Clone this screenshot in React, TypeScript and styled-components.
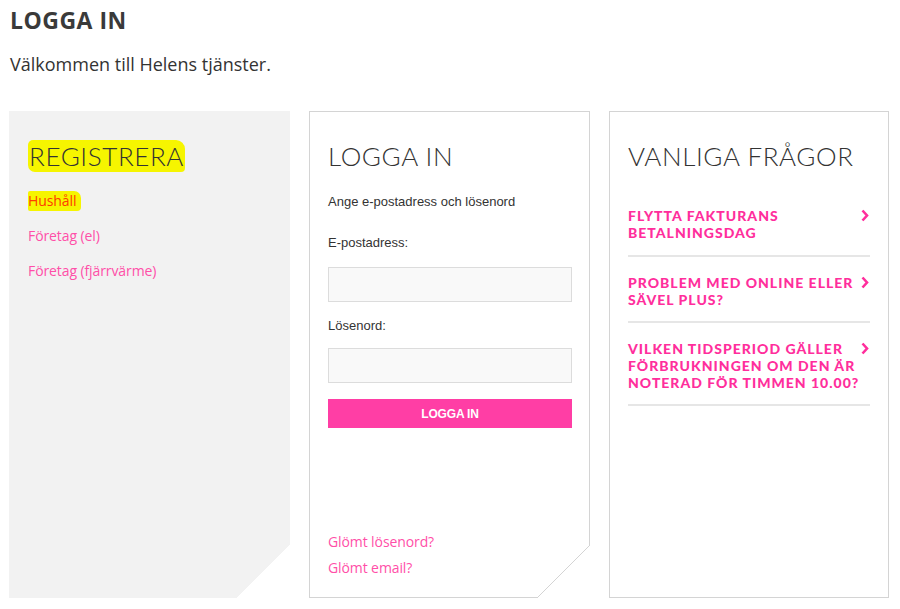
import * as React from 'react';
import styled, { createGlobalStyle } from 'styled-components';

const GlobalStyle = createGlobalStyle`
  html, body { margin: 0; padding: 0; background: #FFF; }
  body { font-family: "Open Sans", "Liberation Sans", sans-serif; color: #333; }
  * { box-sizing: border-box; }
`;

const PINK = '#FF3EA5';
const CUT = 53;

const Page = styled.div`
  width: 900px;
  padding: 0 11px 0 9px;
`;

const Intro = styled.div`
  padding: 4px 1px 0;
`;

const Title = styled.h1`
  margin: 0;
  font-family: "Open Sans", sans-serif;
  font-weight: 700;
  font-size: 23px;
  line-height: 32px;
  color: #3A3A3A;
  letter-spacing: 0.5px;
`;

const Welcome = styled.p`
  margin: 16px 0 0;
  font-size: 18px;
  line-height: 24px;
  color: #333;
`;

const Columns = styled.div`
  display: grid;
  grid-template-columns: 281px 281px 280px;
  column-gap: 19px;
  height: 487px;
  margin-top: 35px;
`;

const Panel = styled.section<{ $grey?: boolean; $cut?: boolean }>`
  position: relative;
  display: flex;
  flex-direction: column;
  padding: 29px 18px 20px 18px;
  background: ${p => (p.$grey ? '#F2F2F2' : '#FFF')};
  border: 1px solid ${p => (p.$grey ? '#F2F2F2' : '#D4D4D4')};

  &::after {
    content: '';
    display: ${p => (p.$cut ? 'block' : 'none')};
    position: absolute;
    right: -1px;
    bottom: -1px;
    width: ${CUT}px;
    height: ${CUT}px;
    background: linear-gradient(
      to bottom right,
      transparent calc(50% - 0.7px),
      ${p => (p.$grey ? '#FFF' : '#D4D4D4')} calc(50% - 0.7px),
      ${p => (p.$grey ? '#FFF' : '#D4D4D4')} calc(50% + 0.7px),
      #FFF calc(50% + 0.7px)
    );
  }
`;

const PanelTitle = styled.h2`
  margin: 0;
  font-family: Lato, sans-serif;
  font-weight: 300;
  font-size: 26px;
  line-height: 30px;
  letter-spacing: 0.6px;
  color: #333;
`;

const Highlight = styled.span`
  background: #F6F500;
  padding: 0 1px;
  border-radius: 5px 9px 4px 7px;
`;

const RegList = styled.ul`
  list-style: none;
  margin: 21px 0 0;
  padding: 0;
  display: flex;
  flex-direction: column;
  gap: 17px;

  li { display: flex; }
`;

const SoftLink = styled.a<{ $active?: boolean }>`
  display: block;
  align-self: flex-start;
  font-family: "Open Sans", sans-serif;
  font-size: 14px;
  line-height: 18px;
  letter-spacing: -0.1px;
  color: ${p => (p.$active ? '#FF3B00' : '#FF4FA8')};
  text-decoration: none;
  ${p =>
    p.$active
      ? 'background: #F6F500; padding: 1px 5px 1px 0; margin: -1px 0; border-radius: 2px 7px 4px 2px;'
      : ''}
`;

const Hint = styled.p`
  margin: 23px 0 0;
  font-family: "Liberation Sans", Arial, sans-serif;
  font-size: 13px;
  line-height: 16px;
  color: #333;
`;

const Label = styled.label<{ $gap: number }>`
  display: block;
  margin-top: ${p => p.$gap}px;
  font-family: "Liberation Sans", Arial, sans-serif;
  font-size: 13px;
  line-height: 16px;
  color: #333;
`;

const Input = styled.input<{ $gap: number }>`
  display: block;
  width: 244px;
  height: 35px;
  margin-top: ${p => p.$gap}px;
  background: #F9F9F9;
  border: 1px solid #DCDCDC;
  outline: none;
`;

const Submit = styled.button`
  width: 244px;
  height: 29px;
  margin-top: 16px;
  background: ${PINK};
  border: none;
  color: #FFF;
  font-family: "Liberation Sans", Arial, sans-serif;
  font-weight: 700;
  font-size: 12px;
  letter-spacing: -0.2px;
`;

const Forgot = styled.div`
  margin-top: auto;
  display: flex;
  flex-direction: column;
  gap: 8px;
`;

const FaqList = styled.ul`
  list-style: none;
  margin: 24px 0 0;
  padding: 0;
`;

const FaqItem = styled.li`
  display: flex;
  justify-content: space-between;
  align-items: flex-start;
  padding: 17px 0 13px;
  border-bottom: 2px solid #E6E6E6;

  &:first-child { padding: 12px 0 14px; }
`;

const FaqText = styled.a`
  max-width: 236px;
  font-family: Lato, sans-serif;
  font-weight: 900;
  font-size: 14px;
  line-height: 17px;
  letter-spacing: 1px;
  color: #FF2E9C;
  text-decoration: none;
`;

const Chevron = styled.svg`
  flex: none;
  margin: 2px 1px 0 0;
`;

const faqs = [
  'FLYTTA FAKTURANS BETALNINGSDAG',
  'PROBLEM MED ONLINE ELLER SÄVEL PLUS?',
  'VILKEN TIDSPERIOD GÄLLER FÖRBRUKNINGEN OM DEN ÄR NOTERAD FÖR TIMMEN 10.00?',
];

const App = () => (
  <>
    <GlobalStyle />
    <Page>
      <Intro>
        <Title>LOGGA IN</Title>
        <Welcome>Välkommen till Helens tjänster.</Welcome>
      </Intro>

      <Columns>
        <Panel $grey $cut>
          <PanelTitle><Highlight>REGISTRERA</Highlight></PanelTitle>
          <RegList>
            <li><SoftLink href="#" $active>Hushåll</SoftLink></li>
            <li><SoftLink href="#">Företag (el)</SoftLink></li>
            <li><SoftLink href="#">Företag (fjärrvärme)</SoftLink></li>
          </RegList>
        </Panel>

        <Panel $cut>
          <PanelTitle>LOGGA IN</PanelTitle>
          <Hint>Ange e-postadress och lösenord</Hint>
          <Label $gap={25}>E-postadress:</Label>
          <Input type="text" $gap={16} />
          <Label $gap={16}>Lösenord:</Label>
          <Input type="password" $gap={14} />
          <Submit>LOGGA IN</Submit>
          <Forgot>
            <SoftLink href="#">Glömt lösenord?</SoftLink>
            <SoftLink href="#">Glömt email?</SoftLink>
          </Forgot>
        </Panel>

        <Panel>
          <PanelTitle>VANLIGA FRÅGOR</PanelTitle>
          <FaqList>
            {faqs.map(q => (
              <FaqItem key={q}>
                <FaqText href="#">{q}</FaqText>
                <Chevron width="8" height="13" viewBox="0 0 8 13">
                  <polyline points="1.5,1.5 6,6.5 1.5,11.5" fill="none" stroke="#FF2E9C" strokeWidth="2.6" />
                </Chevron>
              </FaqItem>
            ))}
          </FaqList>
        </Panel>
      </Columns>
    </Page>
  </>
);

export default App;
